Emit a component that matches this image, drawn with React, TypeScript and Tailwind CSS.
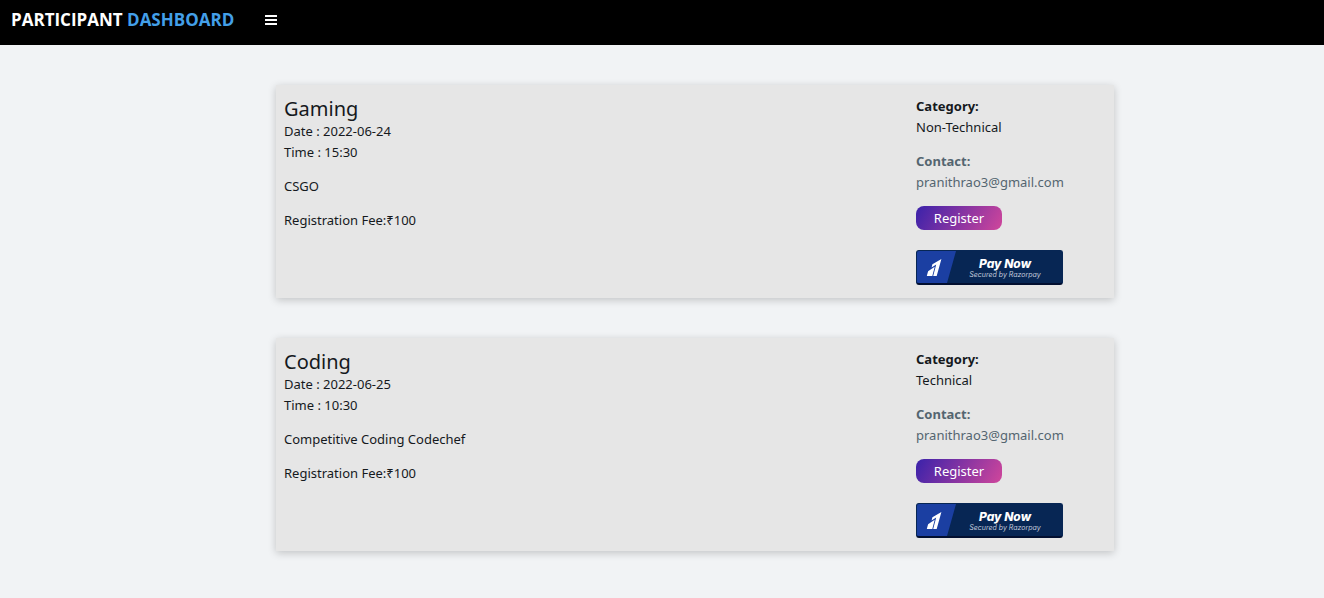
type EventInfo = {
  title: string;
  date: string;
  time: string;
  description: string;
  fee: number;
  category: string;
  contact: string;
};

const events: EventInfo[] = [
  {
    title: "Gaming",
    date: "2022-06-24",
    time: "15:30",
    description: "CSGO",
    fee: 100,
    category: "Non-Technical",
    contact: "pranithrao3@gmail.com",
  },
  {
    title: "Coding",
    date: "2022-06-25",
    time: "10:30",
    description: "Competitive Coding Codechef",
    fee: 100,
    category: "Technical",
    contact: "pranithrao3@gmail.com",
  },
];

function Navbar() {
  return (
    <header className="flex h-[45px] items-start gap-[30px] bg-black px-[11px] pt-2">
      <a href="#" className="font-['Open_Sans','Noto_Sans',sans-serif] text-[17px] leading-6 font-bold text-white">
        PARTICIPANT <span className="text-[#439fe8]">DASHBOARD</span>
      </a>
      <button type="button" aria-label="Toggle menu" className="flex h-6 items-center text-white">
        <svg width="14" height="12" viewBox="0 0 14 12" fill="currentColor" aria-hidden="true">
          <rect x="1" y="0.9" width="12" height="2.2" rx="0.3" />
          <rect x="1" y="4.9" width="12" height="2.2" rx="0.3" />
          <rect x="1" y="8.9" width="12" height="2.2" rx="0.3" />
        </svg>
      </button>
    </header>
  );
}

function PayNowButton() {
  return (
    <button
      type="button"
      className="flex h-[35px] w-[147px] overflow-hidden rounded-[3px] border border-b-2 border-[#072654] border-b-[#020f30] bg-[#072654] text-white italic"
    >
      <svg width="39" height="32" viewBox="0 0 39 32" className="shrink-0" aria-hidden="true">
        <path d="M0 0H39L30 32H0Z" fill="#1b3fa2" />
        <path d="M15.4 13.2 24.4 8 19.7 25H16.2L19.2 13.6 14.6 16.5Z" fill="#fff" />
        <path d="M11.1 20.2 17.7 15.8 15.3 25H9.8Z" fill="#fff" />
      </svg>
      <span className="flex grow flex-col items-center pt-[6px] pr-[11px] pl-[3px] font-['Inter',sans-serif]">
        <span className="text-[12px] leading-[13px] font-extrabold">Pay Now</span>
        <span className="text-[7px] leading-[9px] whitespace-nowrap text-[#c3cbdc]">
          Secured by Razorpay
        </span>
      </span>
    </button>
  );
}

function EventCard({ event }: { event: EventInfo }) {
  return (
    <article className="grid grid-cols-[minmax(0,1fr)_190px] bg-[#e6e6e6] px-2 pt-[11px] pb-[13px] shadow-[0_2px_8px_rgba(0,0,0,0.2)]">
      <div className="flex flex-col gap-[13px]">
        <div>
          <h2 className="text-[20px] leading-[25px]">{event.title}</h2>
          <p>Date : {event.date}</p>
          <p>Time : {event.time}</p>
        </div>
        <p>{event.description}</p>
        <p>Registration Fee:₹{event.fee}</p>
      </div>
      <div className="flex flex-col items-start">
        <p className="font-bold">Category:</p>
        <p>{event.category}</p>
        <div className="pt-[13px] text-[#546570]">
          <p className="font-bold">Contact:</p>
          <p>{event.contact}</p>
        </div>
        <button
          type="button"
          className="mt-[13px] mb-5 h-6 w-[86px] rounded-lg bg-linear-[120deg] from-[#3a22aa] to-[#d0469b] text-white"
        >
          Register
        </button>
        <PayNowButton />
      </div>
    </article>
  );
}

export default function App() {
  return (
    <div className="min-h-screen bg-[#f1f3f5] font-['Noto_Sans','Open_Sans',sans-serif] text-[13px] leading-[21px] text-[#15191d]">
      <Navbar />
      <main className="flex flex-col gap-10 pt-10 pr-[210px] pb-10 pl-[276px]">
        {events.map((event) => (
          <EventCard key={event.title} event={event} />
        ))}
      </main>
    </div>
  );
}
